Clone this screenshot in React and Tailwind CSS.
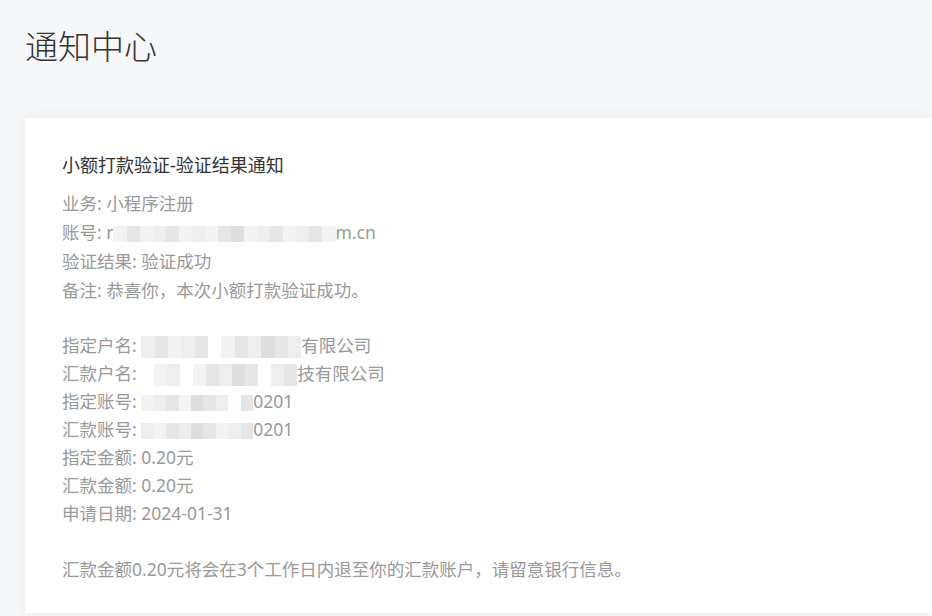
import React from "react";

// light gray pixel blocks standing in for the redacted parts
const Mosaic = ({ cells = [], w = "w-[100px]", tall = false }) => (
  <span className={`inline-flex align-middle ${w}`}>
    {cells.map((c, i) => (
      <span key={i} className={`inline-block flex-1 ${tall ? "h-[22px]" : "h-[16px]"} ${c}`} />
    ))}
  </span>
);

const A = "bg-[#e6e6e6]";
const B = "bg-[#eeeeee]";
const C = "bg-[#f3f3f3]";
const D = "bg-[#dedede]";
const W = "bg-white";

const App = () => {
  return (
    <div
      className="min-h-screen overflow-hidden bg-[#f6f7f9] pl-[25px] pt-[23px] text-[#333]"
      style={{ fontFamily: '"Noto Sans", "Noto Sans CJK SC", sans-serif' }}
    >
      <h1 className="text-[33px] font-light leading-[48px] text-[#333]">通知中心</h1>

      <div className="mt-[47px] bg-white px-[37px] pb-[30px] pt-[33px] shadow-[0_0_14px_rgba(0,0,0,0.05)]">
        <div className="text-[18px] leading-[28px] text-[#333]">小额打款验证-验证结果通知</div>

        <div className="mt-[10px] text-[17.5px] leading-[29px] text-[#999]">
          <div>业务: 小程序注册</div>
          <div className="whitespace-nowrap">
            账号: r
            <Mosaic w="w-[222px]" cells={[C, A, C, B, A, C, B, C, A, D, C, B, A, C, B, A, C]} />
            m.cn
          </div>
          <div>验证结果: 验证成功</div>
          <div>备注: 恭喜你，本次小额打款验证成功。</div>
        </div>

        <div className="mt-[26px] text-[17.5px] leading-[28px] text-[#999]">
          <div className="whitespace-nowrap">
            指定户名: <Mosaic tall w="w-[160px]" cells={[B, A, C, B, A, W, C, A, B, D, A, B]} />有限公司
          </div>
          <div className="whitespace-nowrap">
            汇款户名: <Mosaic tall w="w-[156px]" cells={[W, C, B, W, C, A, B, D, A, W, B, A]} />技有限公司
          </div>
          <div className="whitespace-nowrap">
            指定账号: <Mosaic w="w-[112px]" cells={[C, B, A, C, D, A, B, W, A]} />0201
          </div>
          <div className="whitespace-nowrap">
            汇款账号: <Mosaic w="w-[112px]" cells={[B, C, A, B, D, A, C, B, A]} />0201
          </div>
          <div>指定金额: 0.20元</div>
          <div>汇款金额: 0.20元</div>
          <div>申请日期: 2024-01-31</div>
        </div>

        <div className="mt-[28px] text-[17.5px] leading-[28px] text-[#999]">
          汇款金额0.20元将会在3个工作日内退至你的汇款账户，请留意银行信息。
        </div>
      </div>
    </div>
  );
};

export default App;
